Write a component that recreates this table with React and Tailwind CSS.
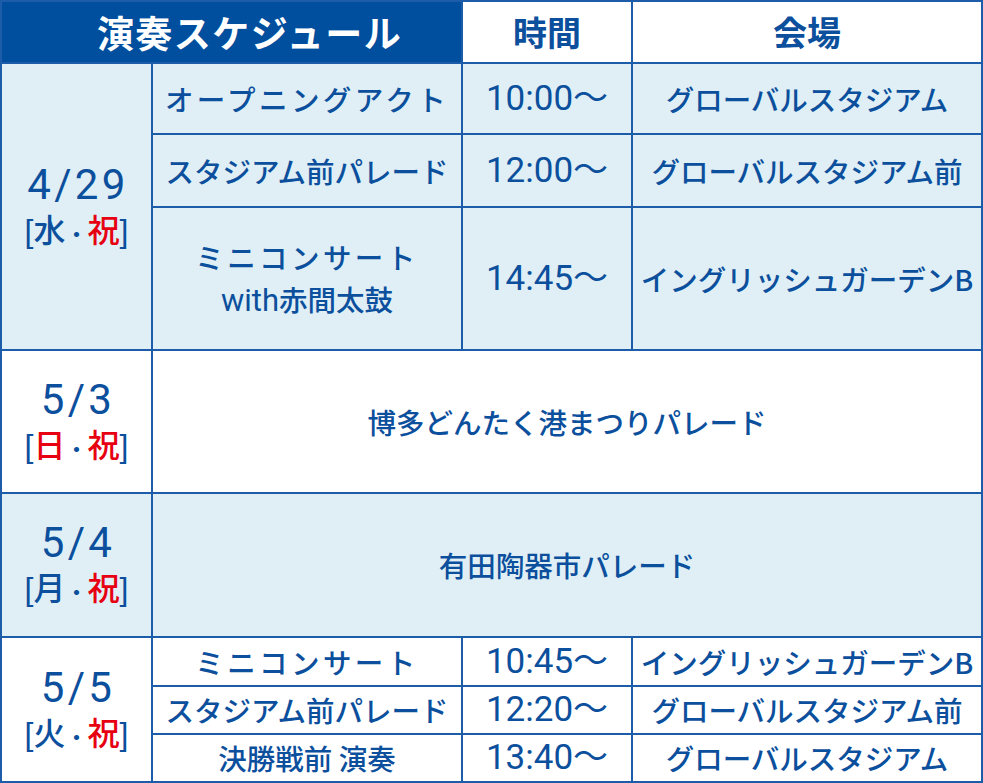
const blue = 'text-[#0b4f9d]';
const cell = 'border-2 border-[#1c5ca9] text-center align-middle p-0';
const font = { fontFamily: '"Noto Sans CJK JP", "Noto Sans", sans-serif' };
const latin = { fontFamily: 'Roboto, "Liberation Sans", "Noto Sans CJK JP", sans-serif' };
const bracket = { fontFamily: '"Liberation Sans", sans-serif' };

function DateCell({ date, day, dayRed, rowSpan, light }) {
  return (
    <td
      rowSpan={rowSpan}
      className={`${cell} ${light ? 'bg-[#dfeff5]' : 'bg-white'} ${blue}`}
    >
      <div
        className="text-[42px] leading-[46px] tracking-[0.08em] pl-[3px] font-normal"
        style={latin}
      >
        {date}
      </div>
      <div className="text-[32px] leading-[40px] font-medium">
        <span style={bracket} className="font-normal">[</span>
        <span className={dayRed ? 'text-[#e60012]' : ''}>{day}</span>
        <span className="text-[22px]">・</span>
        <span className="text-[#e60012]">祝</span>
        <span style={bracket} className="font-normal">]</span>
      </div>
    </td>
  );
}

function Row({ event, time, venue, wide }) {
  return (
    <>
      <td
        className={`${cell} text-[28.5px] leading-[38px] font-medium ${wide ? 'tracking-[0.12em]' : ''}`}
      >
        {event}
      </td>
      <td className={`${cell} text-[35px] leading-[40px] font-normal`} style={latin}>
        {time}
      </td>
      <td className={`${cell} text-[28.5px] leading-[38px] font-medium`}>{venue}</td>
    </>
  );
}

export default function App() {
  return (
    <div className="w-[983px] h-[783px] bg-white overflow-hidden" style={font}>
      <table className={`w-[983px] table-fixed border-collapse ${blue}`}>
        <colgroup>
          <col className="w-[151px]" />
          <col className="w-[310px]" />
          <col className="w-[170px]" />
          <col />
        </colgroup>
        <tbody>
          <tr className="h-[62px]">
            <td
              colSpan={2}
              className={`${cell} bg-[#004e9e] text-white text-[37px] leading-[44px] font-bold tracking-[0.04em] pl-[36px]`}
            >
              演奏スケジュール
            </td>
            <td className={`${cell} bg-white text-[34px] leading-[44px] font-bold`}>時間</td>
            <td className={`${cell} bg-white text-[34px] leading-[44px] font-bold`}>会場</td>
          </tr>
          <tr className="h-[71px] bg-[#dfeff5]">
            <DateCell date="4/29" day="水" rowSpan={3} light />
            <Row event="オープニングアクト" time="10:00〜" venue="グローバルスタジアム" wide />
          </tr>
          <tr className="h-[73px] bg-[#dfeff5]">
            <Row event="スタジアム前パレード" time="12:00〜" venue="グローバルスタジアム前" />
          </tr>
          <tr className="h-[143px] bg-[#dfeff5]">
            <Row
              event={
                <div className="leading-[42px]">
                  <div className="tracking-[0.12em]">ミニコンサート</div>
                  <div>
                    <span style={latin} className="text-[31px] font-normal">with</span>赤間太鼓
                  </div>
                </div>
              }
              time="14:45〜"
              venue="イングリッシュガーデンB"
            />
          </tr>
          <tr className="h-[143px] bg-white">
            <DateCell date="5/3" day="日" dayRed />
            <td colSpan={3} className={`${cell} text-[28.5px] leading-[38px] font-medium`}>
              博多どんたく港まつりパレード
            </td>
          </tr>
          <tr className="h-[144px] bg-[#dfeff5]">
            <DateCell date="5/4" day="月" light />
            <td colSpan={3} className={`${cell} text-[28.5px] leading-[38px] font-medium`}>
              有田陶器市パレード
            </td>
          </tr>
          <tr className="h-[49px] bg-white">
            <DateCell date="5/5" day="火" rowSpan={3} />
            <Row event="ミニコンサート" time="10:45〜" venue="イングリッシュガーデンB" wide />
          </tr>
          <tr className="h-[48px] bg-white">
            <Row event="スタジアム前パレード" time="12:20〜" venue="グローバルスタジアム前" />
          </tr>
          <tr className="h-[48px] bg-white">
            <Row event="決勝戦前 演奏" time="13:40〜" venue="グローバルスタジアム" />
          </tr>
        </tbody>
      </table>
    </div>
  );
}
